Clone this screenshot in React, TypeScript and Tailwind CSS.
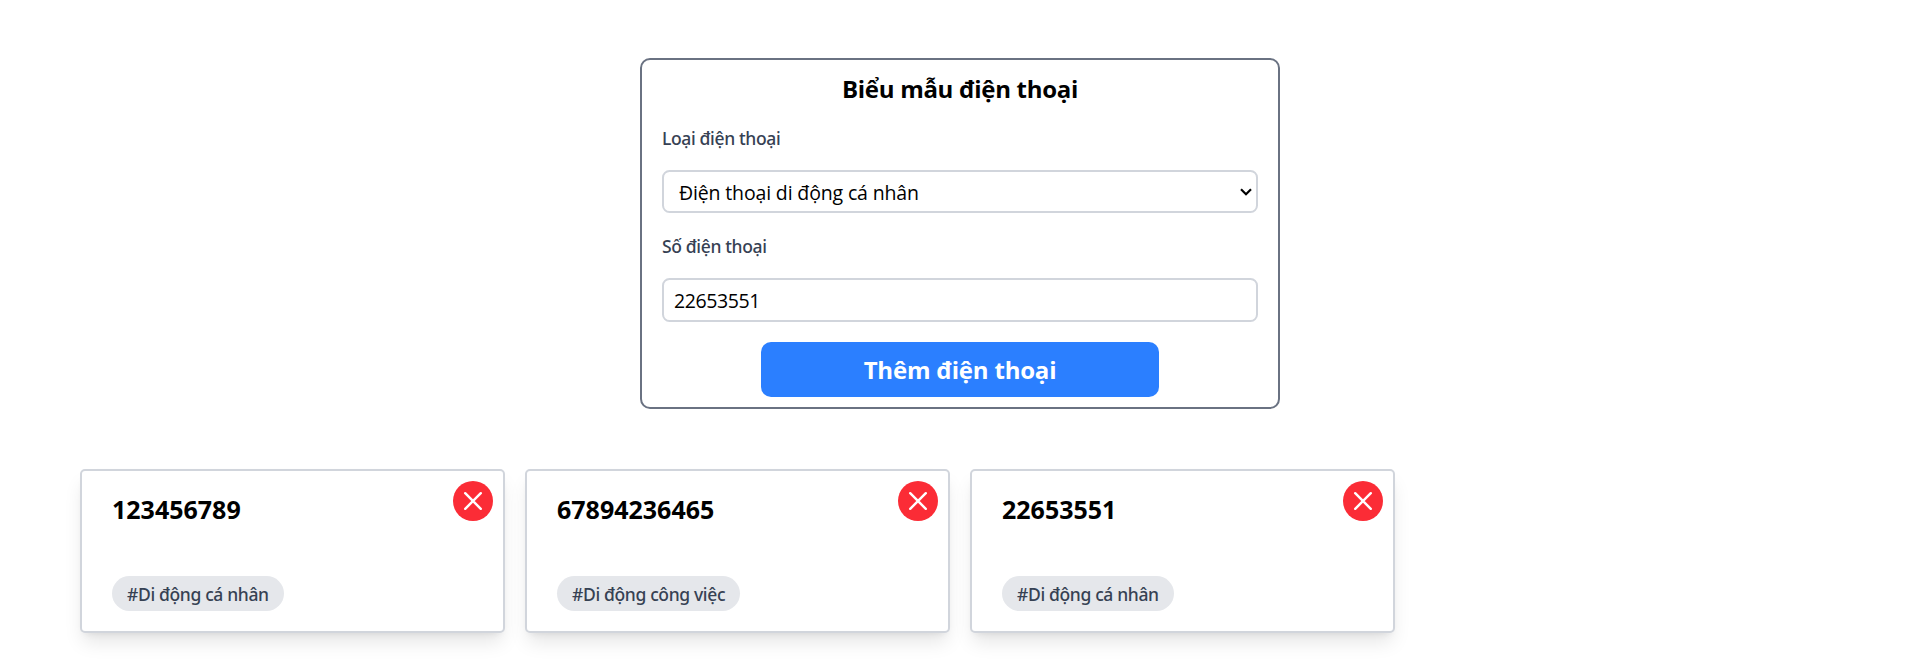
import { useState } from "react";

const initialPhones = [
  { number: "123456789", tag: "#Di động cá nhân" },
  { number: "67894236465", tag: "#Di động công việc" },
  { number: "22653551", tag: "#Di động cá nhân" },
];

function PhoneCard({ number, tag, onRemove }: { number: string; tag: string; onRemove: () => void }) {
  return (
    <div className="relative flex h-[164px] flex-col items-start justify-between rounded-[5px] border-2 border-gray-300 bg-white pt-5 pr-5 pb-5 pl-[30px] shadow-[0_12.5px_18.75px_-3.75px_rgba(0,0,0,0.1),0_5px_7.5px_-5px_rgba(0,0,0,0.1)]">
      <h3 className="font-['Noto_Sans','Open_Sans',sans-serif] text-[25px] leading-9 font-bold text-black">{number}</h3>
      <span className="flex h-[35px] items-center rounded-full bg-gray-200 px-[15px] pt-px font-['Noto_Sans','Open_Sans',sans-serif] text-[17.5px] font-medium tracking-[-0.36px] whitespace-nowrap text-gray-700">
        {tag}
      </span>
      <button
        type="button"
        aria-label="Xóa"
        onClick={onRemove}
        className="absolute top-2.5 right-2.5 flex size-10 items-center justify-center rounded-full bg-red-500 text-white"
      >
        <svg viewBox="0 0 24 24" className="size-6" fill="none" stroke="currentColor" strokeWidth="2.4" strokeLinecap="round">
          <path d="M4.2 4.2 19.8 19.8M19.8 4.2 4.2 19.8" />
        </svg>
      </button>
    </div>
  );
}

export default function App() {
  const [phones, setPhones] = useState(initialPhones);
  return (
    <div className="flex min-h-[666px] flex-col bg-white px-20 pt-[58px] font-['Open_Sans','Noto_Sans',sans-serif]">
      <form className="flex h-[351px] w-[640px] flex-col self-center rounded-[10px] border-2 border-gray-500 px-5">
        <h2 className="mt-[11px] text-center text-[24px] leading-9 font-bold tracking-[-0.3px] text-black">Biểu mẫu điện thoại</h2>
        <label className="mt-[17px] font-['Noto_Sans','Open_Sans',sans-serif] text-[17.5px] leading-7 font-medium tracking-[-0.36px] text-gray-700">Loại điện thoại</label>
        <div className="mt-[18px] flex h-[43px] items-center justify-between rounded-[7.5px] border-2 border-gray-300 pr-1 pl-[15px] text-[19.5px] tracking-[-0.15px]">
          <span className="pt-0.5 leading-6">Điện thoại di động cá nhân</span>
          <svg viewBox="0 0 12 8" className="h-2 w-3" fill="none" stroke="black" strokeWidth="2.2">
            <path d="M1 1.2 6 6.2 11 1.2" />
          </svg>
        </div>
        <label className="mt-[19px] font-['Noto_Sans','Open_Sans',sans-serif] text-[17.5px] leading-7 font-medium tracking-[-0.36px] text-gray-700">Số điện thoại</label>
        <input
          className="mt-[18px] h-11 rounded-[7.5px] border-2 border-gray-300 px-2.5 pt-px text-[19.5px] tracking-[-0.4px] outline-none"
          defaultValue="22653551"
        />
        <button
          type="button"
          className="mt-5 h-[55px] w-2/3 self-center rounded-[10px] bg-blue-500 pt-px text-[24px] font-bold tracking-[-0.2px] text-white"
        >
          Thêm điện thoại
        </button>
      </form>
      <div className="mt-[60px] grid grid-cols-4 gap-5">
        {phones.map((phone) => (
          <PhoneCard
            key={phone.number}
            {...phone}
            onRemove={() => setPhones(phones.filter((p) => p.number !== phone.number))}
          />
        ))}
      </div>
    </div>
  );
}
